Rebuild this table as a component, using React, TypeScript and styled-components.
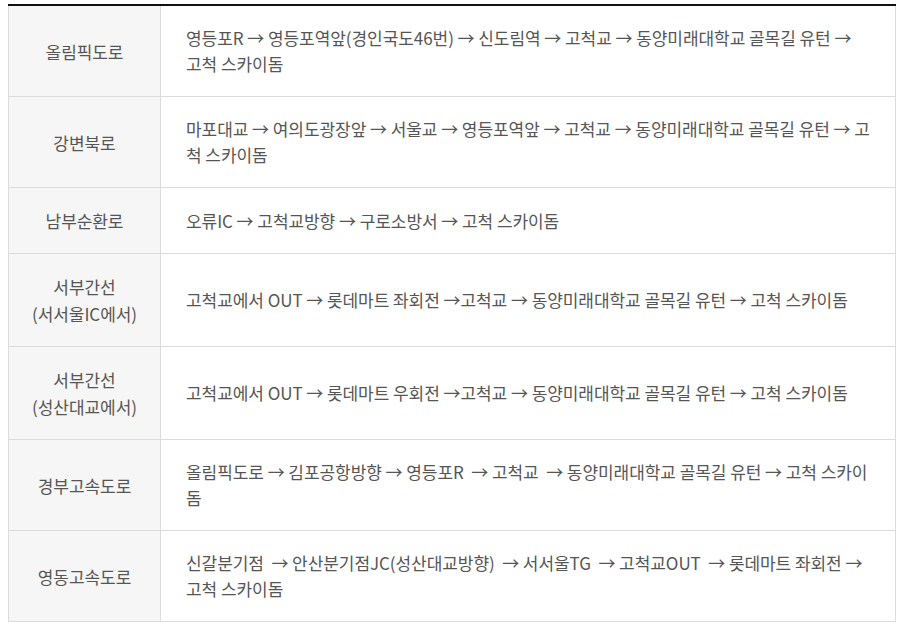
import React from 'react'
import styled, { createGlobalStyle } from 'styled-components'

type Route = {
    road: string[]
    path: string
}

const routes: Array<Route> = [
    { road: ['올림픽도로'], path: '영등포R → 영등포역앞(경인국도46번) → 신도림역 → 고척교 → 동양미래대학교 골목길 유턴 → 고척 스카이돔' },
    { road: ['강변북로'], path: '마포대교 → 여의도광장앞 → 서울교 → 영등포역앞 → 고척교 → 동양미래대학교 골목길 유턴 → 고척 스카이돔' },
    { road: ['남부순환로'], path: '오류IC → 고척교방향 → 구로소방서 → 고척 스카이돔' },
    { road: ['서부간선', '(서서울IC에서)'], path: '고척교에서 OUT → 롯데마트 좌회전 →고척교 → 동양미래대학교 골목길 유턴 → 고척 스카이돔' },
    { road: ['서부간선', '(성산대교에서)'], path: '고척교에서 OUT → 롯데마트 우회전 →고척교 → 동양미래대학교 골목길 유턴 → 고척 스카이돔' },
    { road: ['경부고속도로'], path: '올림픽도로 → 김포공항방향 → 영등포R \u00a0→ 고척교 \u00a0→ 동양미래대학교 골목길 유턴 → 고척 스카이돔' },
    { road: ['영동고속도로'], path: '신갈분기점 \u00a0→ 안산분기점JC(성산대교방향) \u00a0→ 서서울TG \u00a0→ 고척교OUT \u00a0→ 롯데마트 좌회전 → 고척 스카이돔' },
]

const GlobalStyle = createGlobalStyle`
    body {
        margin: 0;
        padding: 4px 5px 0 8px;
        background: #fff;
        font-family: "Noto Sans CJK KR", "Noto Sans", sans-serif;
    }
`

export default function App() {
    return (
        <>
            <GlobalStyle />
            <RouteTable>
                <tbody>
                    {routes.map((route) => (
                        <tr key={route.road.join('')}>
                            <RoadCell>
                                {route.road.map((line) => (
                                    <div key={line}>{line}</div>
                                ))}
                            </RoadCell>
                            <PathCell>{route.path}</PathCell>
                        </tr>
                    ))}
                </tbody>
            </RouteTable>
        </>
    )
}

const RouteTable = styled.table`
    width: 888px;
    border-collapse: collapse;
    border-top: 2px solid #111;
    table-layout: fixed;
    font-size: 17px;
    letter-spacing: -0.06px;
    color: #555;
`
const RoadCell = styled.th`
    box-sizing: border-box;
    width: 152px;
    padding: 19px 6px;
    background: #f6f6f6;
    border: 1px solid #dcdcdc;
    border-top: none;
    font-weight: normal;
    line-height: 27px;
    text-align: center;
    vertical-align: middle;
`
const PathCell = styled.td`
    padding: 19px 25px;
    border: 1px solid #dcdcdc;
    border-top: none;
    line-height: 26px;
    text-align: left;
    vertical-align: middle;
`
